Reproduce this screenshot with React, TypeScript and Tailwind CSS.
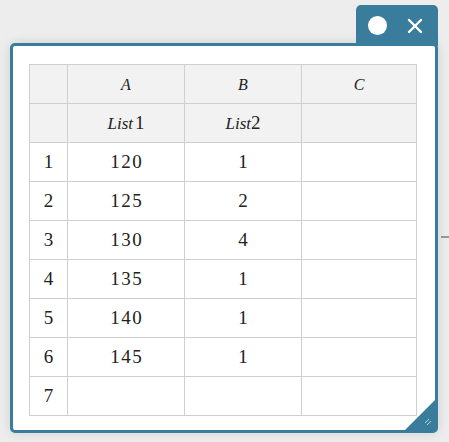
import { X } from 'lucide-react';

const rows: [string, string, string][] = [
  ['1', '120', '1'],
  ['2', '125', '2'],
  ['3', '130', '4'],
  ['4', '135', '1'],
  ['5', '140', '1'],
  ['6', '145', '1'],
  ['7', '', ''],
];

const cell =
  'border border-[#cfcfcf] h-[39px] p-0 text-center align-middle font-[family-name:Liberation_Serif,serif] text-[19px] text-[#222]';

export default function App() {
  return (
    <div className="relative w-[449px] h-[442px] overflow-hidden bg-[#ededed] pt-[43px] pl-[10px] font-[family-name:Liberation_Serif,serif]">
      {/* stray line on the desktop */}
      <div className="absolute right-0 top-[236px] w-[8px] h-[2px] bg-[#9a9a9a]" />

      {/* window */}
      <div className="relative w-[428px] h-[390px] rounded-[5px] border-[3px] border-[#3a7c9c] bg-white shadow-[0_0_12px_rgba(0,0,0,0.12)] pt-[18px] pl-[16px]">
        {/* title tab */}
        <div className="absolute -top-[41px] -right-[3px] w-[82px] h-[41px] rounded-t-[5px] bg-[#3a7c9c] flex items-center justify-between pl-[12px] pr-[11px]">
          <div className="w-[19px] h-[19px] rounded-full bg-white" />
          <X className="w-[24px] h-[24px] text-white" strokeWidth={2.4} />
        </div>

        <table className="border-collapse">
          <colgroup>
            <col className="w-[38px]" />
            <col className="w-[117px]" />
            <col className="w-[117px]" />
            <col className="w-[115px]" />
          </colgroup>
          <tbody>
            <tr className="bg-[#f2f2f2]">
              <td className={cell} />
              <td className={cell}><span className="italic text-[16px]">A</span></td>
              <td className={cell}><span className="italic text-[16px]">B</span></td>
              <td className={cell}><span className="italic text-[16px]">C</span></td>
            </tr>
            <tr className="bg-[#f2f2f2]">
              <td className={cell} />
              <td className={cell}>
                <span className="italic text-[17px]">List</span>
                <span className="ml-[2px]">1</span>
              </td>
              <td className={cell}>
                <span className="italic text-[17px]">List</span>
                <span>2</span>
              </td>
              <td className={cell} />
            </tr>
            {rows.map(([n, a, b]) => (
              <tr key={n}>
                <td className={cell}>{n}</td>
                <td className={cell}>
                  <span className="tracking-[1.5px] pl-[1.5px]">{a}</span>
                </td>
                <td className={cell}>{b}</td>
                <td className={cell} />
              </tr>
            ))}
          </tbody>
        </table>

        {/* resize grip */}
        <div className="absolute right-0 bottom-0 w-[30px] h-[30px]">
          <svg width="30" height="30" viewBox="0 0 30 30">
            <path d="M30 0 L30 30 L0 30 Z" fill="#3a7c9c" />
            <path d="M20 23 L24 19 M22 25 L26 21" stroke="#b9d3df" strokeWidth="1" />
          </svg>
        </div>
      </div>
    </div>
  );
}
